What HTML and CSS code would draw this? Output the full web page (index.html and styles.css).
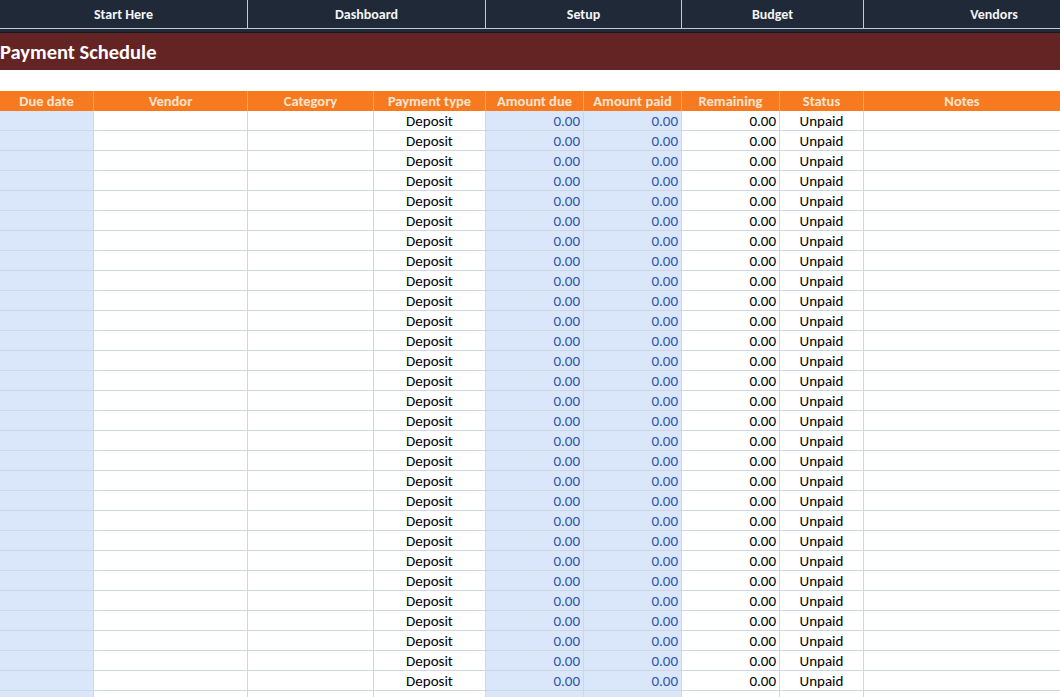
FILE: index.html
```html
<!DOCTYPE html>
<html lang="en">
<head>
    <meta charset="UTF-8">
    <title>Payment Schedule</title>
    <link rel="stylesheet" href="styles.css">
</head>
<body>
    <nav class="topnav">
        <div class="nav-item">Start Here</div>
        <div class="nav-item">Dashboard</div>
        <div class="nav-item">Setup</div>
        <div class="nav-item">Budget</div>
        <div class="nav-item">Vendors</div>
    </nav>
    <div class="nav-strip"></div>

    <h1 class="title">Payment Schedule</h1>

    <table class="sheet">
        <colgroup>
            <col class="c-date">
            <col class="c-vendor">
            <col class="c-cat">
            <col class="c-type">
            <col class="c-due">
            <col class="c-paid">
            <col class="c-rem">
            <col class="c-status">
            <col class="c-notes">
        </colgroup>
        <thead>
            <tr>
                <th>Due date</th>
                <th>Vendor</th>
                <th>Category</th>
                <th>Payment type</th>
                <th>Amount due</th>
                <th>Amount paid</th>
                <th>Remaining</th>
                <th>Status</th>
                <th>Notes</th>
            </tr>
        </thead>
        <tbody id="rows"></tbody>
    </table>

    <script>
        let body = document.getElementById("rows");
        let html = "";
        for (let i = 0; i < 29; i++) {
            html += `<tr>
                <td class="input"></td>
                <td></td>
                <td></td>
                <td class="center">Deposit</td>
                <td class="input num">0.00</td>
                <td class="input num">0.00</td>
                <td class="num">0.00</td>
                <td class="center">Unpaid</td>
                <td></td>
            </tr>`;
        }
        // last row only peeks in at the bottom edge
        html += `<tr>
            <td class="input"></td><td></td><td></td><td></td>
            <td class="input"></td><td class="input"></td><td></td><td></td><td></td>
        </tr>`;
        body.innerHTML = html;
    </script>
</body>
</html>
```

FILE: styles.css
```css
body {
    margin: 0;
    width: 1060px;
    height: 697px;
    overflow: hidden;
    background: #fff;
    font-family: Carlito, Lato, "Open Sans", sans-serif;
    font-size: 15px;
    color: #000;
}
.topnav {
    display: grid;
    grid-template-columns: 248px 238px 196px 182px 260px;
    height: 28px;
    background: #1f2937;
    border-bottom: 1px solid #c3cbd6;
    overflow: hidden;
}
.nav-item {
    display: flex;
    align-items: center;
    justify-content: center;
    color: #f2f4f7;
    font-weight: bold;
    font-size: 14px;
    border-right: 1px solid #c3cbd6;
}
.nav-item:last-child { border-right: none; }
.nav-strip {
    height: 3px;
    background: #1f2937;
    border-bottom: 1px solid #141a24;
}
.title {
    margin: 0;
    height: 37px;
    line-height: 38px;
    background: #632423;
    color: #fff;
    font-size: 20.5px;
    font-weight: bold;
    padding-left: 0;
}
.sheet {
    margin-top: 21px;
    width: 1060px;
    table-layout: fixed;
    border-collapse: separate;
    border-spacing: 0;
}
.c-date { width: 94px; }
.c-vendor { width: 154px; }
.c-cat { width: 126px; }
.c-type { width: 112px; }
.c-due { width: 98px; }
.c-paid { width: 98px; }
.c-rem { width: 98px; }
.c-status { width: 84px; }
.c-notes { width: 196px; }
.sheet th {
    height: 20px;
    padding: 0;
    background: #f77a21;
    color: #fde4cf;
    font-weight: bold;
    font-size: 14.5px;
    border-right: 1px solid #f6a46a;
    box-sizing: border-box;
    white-space: nowrap;
}
.sheet th:last-child { border-right: none; }
.sheet td {
    height: 20px;
    padding: 2px 3px 0;
    box-sizing: border-box;
    border-right: 1px solid #d0d7e2;
    border-bottom: 1px solid #d0d7e2;
    white-space: nowrap;
    overflow: hidden;
    line-height: 17px;
}
.sheet td:last-child { border-right: none; }
.input { background: #dae7fa; }
.num { text-align: right; }
.input.num { color: #2f55b4; }
.center { text-align: center; }
```
